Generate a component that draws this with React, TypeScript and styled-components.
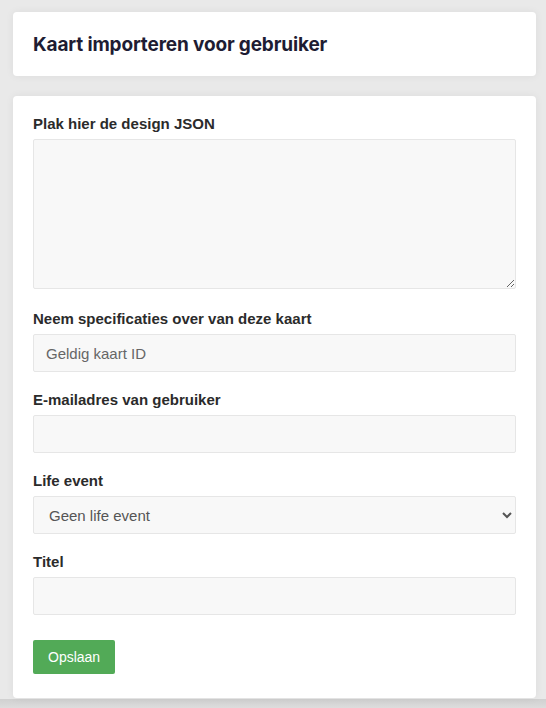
import { useState } from "react";
import styled, { createGlobalStyle } from "styled-components";

const GlobalStyle = createGlobalStyle`
  html, body {
    margin: 0;
    padding: 0;
    background: #e9e9e9;
  }
  * {
    box-sizing: border-box;
  }
`;

const lifeEvents = ["Geen life event", "Verjaardag", "Huwelijk", "Geboorte"];

export default function App() {
  const [json, setJson] = useState("");
  const [cardId, setCardId] = useState("");
  const [email, setEmail] = useState("");
  const [lifeEvent, setLifeEvent] = useState(lifeEvents[0]);
  const [title, setTitle] = useState("");

  return (
    <>
      <GlobalStyle />
      <Page>
        <HeaderCard>
          <Title>Kaart importeren voor gebruiker</Title>
        </HeaderCard>

        <FormCard onSubmit={(e) => e.preventDefault()}>
          <Field $gap={20}>
            <Label>Plak hier de design JSON</Label>
            <TextArea value={json} onChange={(e) => setJson(e.target.value)} />
          </Field>

          <Field>
            <Label>Neem specificaties over van deze kaart</Label>
            <Input
              placeholder="Geldig kaart ID"
              value={cardId}
              onChange={(e) => setCardId(e.target.value)}
            />
          </Field>

          <Field>
            <Label>E-mailadres van gebruiker</Label>
            <Input
              type="email"
              value={email}
              onChange={(e) => setEmail(e.target.value)}
            />
          </Field>

          <Field>
            <Label>Life event</Label>
            <Select value={lifeEvent} onChange={(e) => setLifeEvent(e.target.value)}>
              {lifeEvents.map((item) => (
                <option key={item}>{item}</option>
              ))}
            </Select>
          </Field>

          <Field>
            <Label>Titel</Label>
            <Input value={title} onChange={(e) => setTitle(e.target.value)} />
          </Field>

          <SaveButton type="submit">Opslaan</SaveButton>
        </FormCard>
      </Page>
      <BottomShade />
    </>
  );
}

const Page = styled.div`
  padding: 12px 10px 0 13px;
  display: flex;
  flex-direction: column;
  gap: 20px;
`;

const Card = styled.div`
  background: #fff;
  border-radius: 4px;
  box-shadow: 0 0 8px rgba(0, 0, 0, 0.06);
`;

const HeaderCard = styled(Card)`
  height: 64px;
  padding: 0 20px;
  display: flex;
  align-items: center;
`;

const Title = styled.h1`
  margin: 0;
  font-family: Inter, "Noto Sans", sans-serif;
  font-size: 19px;
  font-weight: 700;
  color: #1e1c33;
  letter-spacing: -0.15px;
`;

const FormCard = styled(Card).attrs({ as: "form" })`
  padding: 18px 20px 24px;
  display: flex;
  flex-direction: column;
  align-items: flex-start;
`;

const Field = styled.div<{ $gap?: number }>`
  width: 100%;
  display: flex;
  flex-direction: column;
  margin-bottom: ${(p) => p.$gap ?? 18}px;
`;

const Label = styled.label`
  font-family: "Liberation Sans", Arial, sans-serif;
  font-size: 15px;
  line-height: 20px;
  font-weight: 700;
  color: #2b2b2b;
  margin-bottom: 5px;
`;

const fieldBase = `
  width: 100%;
  background: #f8f8f8;
  border: 1px solid #e6e6e6;
  border-radius: 2px;
  font-family: "Liberation Sans", Arial, sans-serif;
  font-size: 15px;
  color: #555;
  outline: none;
`;

const TextArea = styled.textarea`
  ${fieldBase}
  height: 150px;
  padding: 8px 12px;
  display: block;
`;

const Input = styled.input`
  ${fieldBase}
  height: 38px;
  padding: 0 12px;

  &::placeholder {
    color: #666;
  }
`;

const Select = styled.select`
  ${fieldBase}
  height: 38px;
  padding: 0 11px;
`;

const SaveButton = styled.button`
  margin-top: 7px;
  height: 34px;
  padding: 0 15px;
  border: none;
  border-radius: 2px;
  background: #52aa57;
  color: #fff;
  font-family: "Liberation Sans", Arial, sans-serif;
  font-size: 14px;
  cursor: pointer;
`;

const BottomShade = styled.div`
  margin-top: 1px;
  height: 40px;
  background: linear-gradient(#d0d0d0, #dedede 10px, #e4e4e4);
`;
